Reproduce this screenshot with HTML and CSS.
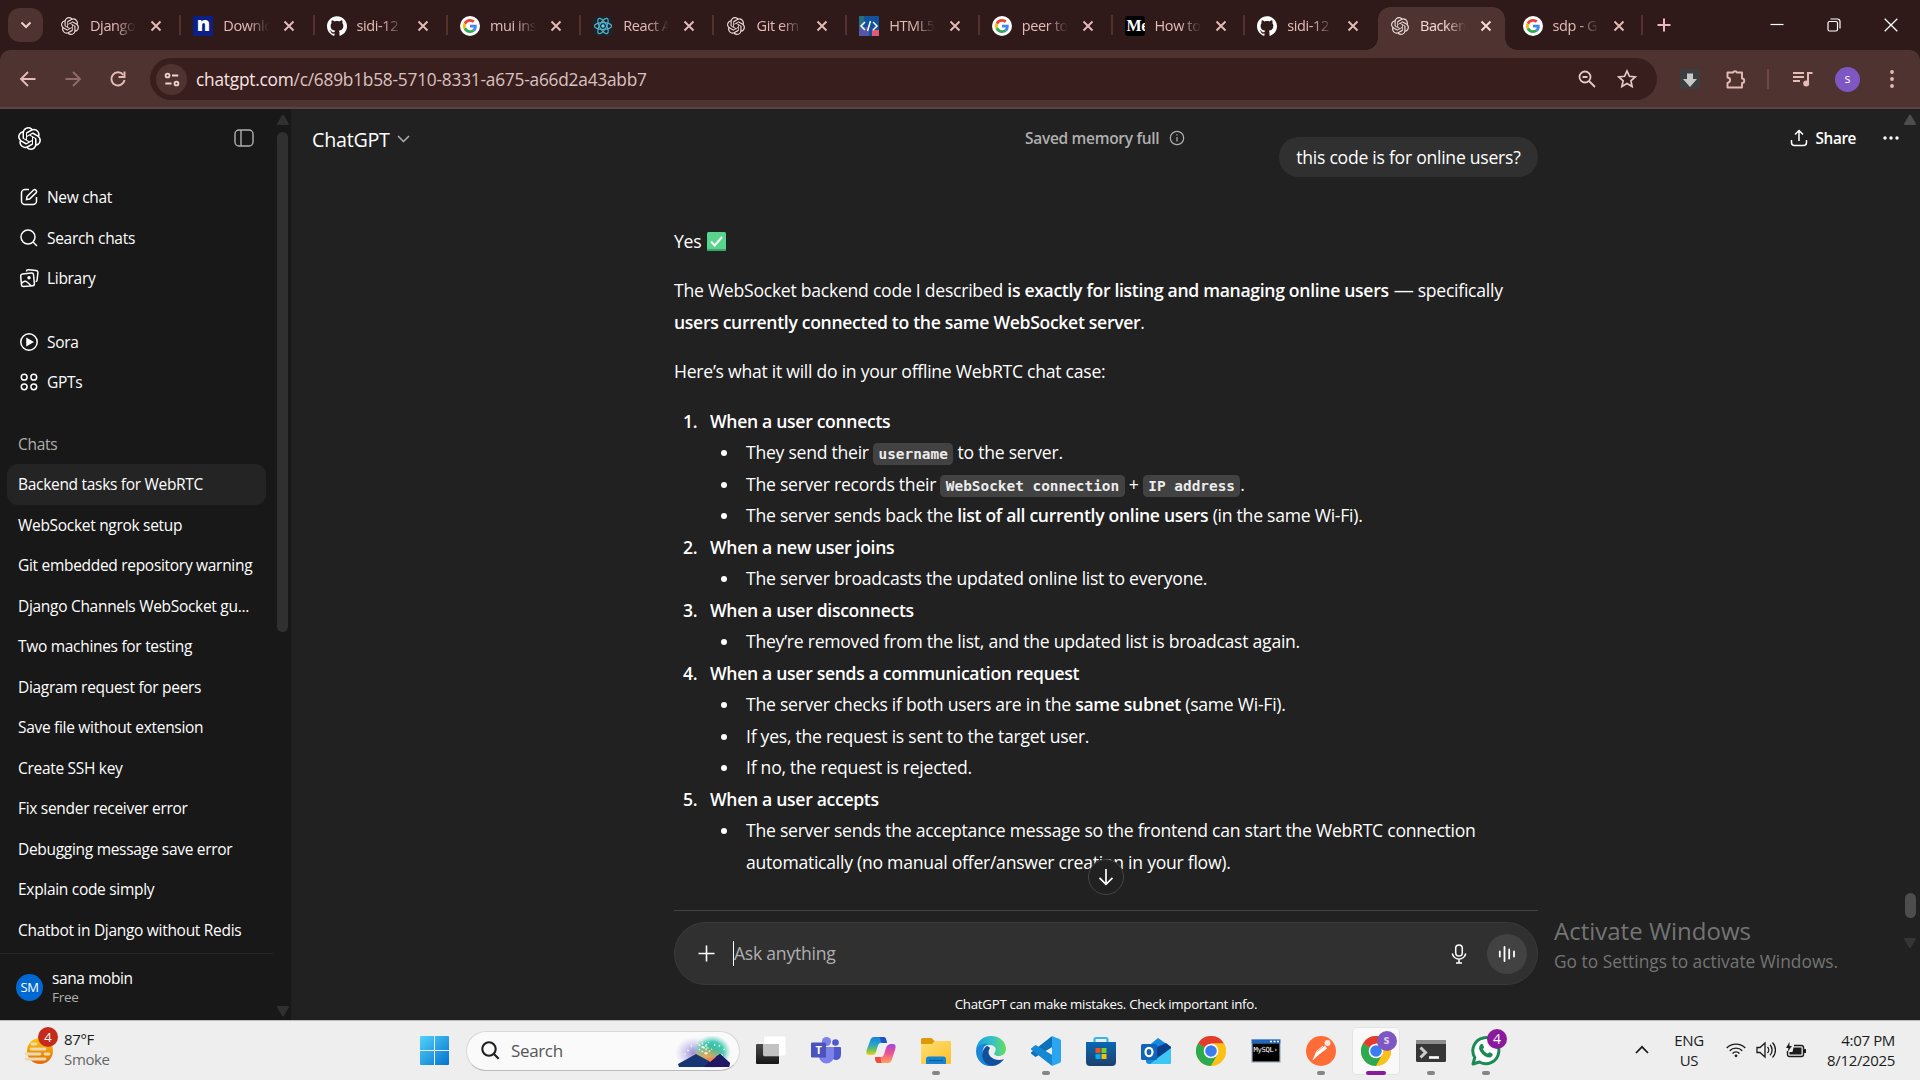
FILE: index.html
```html
<!DOCTYPE html>
<html lang="en">
<head>
<meta charset="utf-8">
<title>Backend tasks for WebRTC</title>
<link rel="stylesheet" href="styles.css">
</head>
<body>
<svg class="defs" width="0" height="0" aria-hidden="true">
  <defs>
    <symbol id="openai" viewBox="0 0 24 24"><path fill="currentColor" d="M22.2819 9.8211a5.9847 5.9847 0 0 0-.5157-4.9108 6.0462 6.0462 0 0 0-6.5098-2.9A6.0651 6.0651 0 0 0 4.9807 4.1818a5.9847 5.9847 0 0 0-3.9977 2.9 6.0462 6.0462 0 0 0 .7427 7.0966 5.98 5.98 0 0 0 .511 4.9107 6.051 6.051 0 0 0 6.5146 2.9001A5.9847 5.9847 0 0 0 13.2599 24a6.0557 6.0557 0 0 0 5.7718-4.2058 5.9894 5.9894 0 0 0 3.9977-2.9001 6.0557 6.0557 0 0 0-.7475-7.0729zm-9.022 12.6081a4.4755 4.4755 0 0 1-2.8764-1.0408l.1419-.0804 4.7783-2.7582a.7948.7948 0 0 0 .3927-.6813v-6.7369l2.02 1.1686a.071.071 0 0 1 .038.052v5.5826a4.504 4.504 0 0 1-4.4945 4.4944zm-9.6607-4.1254a4.4708 4.4708 0 0 1-.5346-3.0137l.142.0852 4.783 2.7582a.7712.7712 0 0 0 .7806 0l5.8428-3.3685v2.3324a.0804.0804 0 0 1-.0332.0615L9.74 19.9502a4.4992 4.4992 0 0 1-6.1408-1.6464zM2.3408 7.8956a4.485 4.485 0 0 1 2.3655-1.9728V11.6a.7664.7664 0 0 0 .3879.6765l5.8144 3.3543-2.0201 1.1685a.0757.0757 0 0 1-.071 0l-4.8303-2.7865A4.504 4.504 0 0 1 2.3408 7.872zm16.5963 3.8558L13.1038 8.364 15.1192 7.2a.0757.0757 0 0 1 .071 0l4.8303 2.7913a4.4944 4.4944 0 0 1-.6765 8.1042v-5.6772a.79.79 0 0 0-.407-.667zm2.0107-3.0231l-.142-.0852-4.7735-2.7818a.7759.7759 0 0 0-.7854 0L9.409 9.2297V6.8974a.0662.0662 0 0 1 .0284-.0615l4.8303-2.7866a4.4992 4.4992 0 0 1 6.6802 4.66zM8.3065 12.863l-2.02-1.1638a.0804.0804 0 0 1-.038-.0567V6.0742a4.4992 4.4992 0 0 1 7.3757-3.4537l-.142.0805L8.704 5.459a.7948.7948 0 0 0-.3927.6813zm1.0976-2.3654l2.602-1.4998 2.6069 1.4998v2.9994l-2.5974 1.4997-2.6067-1.4997Z"/></symbol>
    <symbol id="github" viewBox="0 0 24 24"><path fill="#fff" d="M12 .297c-6.63 0-12 5.373-12 12 0 5.303 3.438 9.8 8.205 11.385.6.113.82-.258.82-.577 0-.285-.01-1.04-.015-2.04-3.338.724-4.042-1.61-4.042-1.61C4.422 18.07 3.633 17.7 3.633 17.7c-1.087-.744.084-.729.084-.729 1.205.084 1.838 1.236 1.838 1.236 1.07 1.835 2.809 1.305 3.495.998.108-.776.417-1.305.76-1.605-2.665-.3-5.466-1.332-5.466-5.93 0-1.31.465-2.38 1.235-3.22-.135-.303-.54-1.523.105-3.176 0 0 1.005-.322 3.3 1.23.96-.267 1.98-.399 3-.405 1.02.006 2.04.138 3 .405 2.28-1.552 3.285-1.23 3.285-1.23.645 1.653.24 2.873.12 3.176.765.84 1.23 1.91 1.23 3.22 0 4.61-2.805 5.625-5.475 5.92.42.36.81 1.096.81 2.22 0 1.606-.015 2.896-.015 3.286 0 .315.21.69.825.57C20.565 22.092 24 17.592 24 12.297c0-6.627-5.373-12-12-12"/></symbol>
    <symbol id="google" viewBox="-10 -10 68 68"><circle cx="24" cy="24" r="34" fill="#fff"/><path fill="#EA4335" d="M24 9.500c3.540 0 6.710 1.220 9.210 3.600l6.850-6.850C35.900 2.380 30.470 0 24 0 14.620 0 6.510 5.380 2.560 13.220l7.980 6.190C12.430 13.720 17.740 9.500 24 9.500z"/><path fill="#4285F4" d="M46.980 24.550c0-1.570-.150-3.090-.380-4.550H24v9.020h12.940c-.580 2.960-2.260 5.480-4.780 7.180l7.730 6c4.510-4.180 7.090-10.360 7.090-17.650z"/><path fill="#FBBC05" d="M10.530 28.590c-.480-1.450-.760-2.990-.760-4.590s.270-3.140.760-4.590l-7.980-6.190C.920 16.460 0 20.120 0 24c0 3.880.920 7.540 2.560 10.780l7.970-6.190z"/><path fill="#34A853" d="M24 48c6.480 0 11.930-2.130 15.890-5.810l-7.730-6c-2.150 1.450-4.920 2.300-8.160 2.300-6.260 0-11.570-4.220-13.470-9.910l-7.980 6.190C6.510 42.620 14.620 48 24 48z"/></symbol>
    <symbol id="x" viewBox="0 0 12 12"><path d="M1.500 1.500l9 9M10.500 1.500l-9 9" stroke="currentColor" stroke-width="1.900" fill="none"/></symbol>
    <symbol id="chrome" viewBox="0 0 30 30"><circle cx="15" cy="15" r="15" fill="#fbc116"/><path d="M15 15L2 7.500A15 15 0 0 1 28 7.500H15z" fill="#e33b2e"/><path d="M15 15L2 7.500A15 15 0 0 0 15 30l6.500-11.300z" fill="#2da94f"/><path d="M15 7.500h13A15 15 0 0 1 15 30l6.500-11.300z" fill="#fbc116"/><circle cx="15" cy="15" r="7.300" fill="#fff"/><circle cx="15" cy="15" r="5.800" fill="#3b7ded"/></symbol>
    <linearGradient id="win" x1="0" y1="0" x2="1" y2="1"><stop offset="0" stop-color="#52d3fb"/><stop offset="1" stop-color="#0471ce"/></linearGradient>
    <linearGradient id="folder" x1="0" y1="0" x2="1" y2="1"><stop offset="0" stop-color="#ffdf72"/><stop offset="1" stop-color="#fbc02d"/></linearGradient>
    <linearGradient id="sun" x1="0" y1="0" x2="0" y2="1"><stop offset="0" stop-color="#fdc800"/><stop offset="1" stop-color="#e8650c"/></linearGradient>
    <linearGradient id="edgeTop" x1="0" y1="0" x2="1" y2="0"><stop offset="0" stop-color="#1b9de2"/><stop offset=".55" stop-color="#35c1c8"/><stop offset="1" stop-color="#66df59"/></linearGradient>
    <linearGradient id="copA" x1="0" y1="0" x2="0" y2="1"><stop offset="0" stop-color="#1483dc"/><stop offset=".45" stop-color="#2aa7c9"/><stop offset=".75" stop-color="#7fc34a"/><stop offset="1" stop-color="#f4cf1c"/></linearGradient>
    <linearGradient id="copB" x1="0" y1="0" x2="0" y2="1"><stop offset="0" stop-color="#a345dc"/><stop offset=".5" stop-color="#ee5390"/><stop offset="1" stop-color="#fea55b"/></linearGradient>
    <linearGradient id="store" x1="0" y1="0" x2="0" y2="1"><stop offset="0" stop-color="#0868b4"/><stop offset="1" stop-color="#1f3f6b"/></linearGradient>
    <linearGradient id="tvA" x1="0" y1="0" x2="0" y2="1"><stop offset="0" stop-color="#4b4b4b"/><stop offset="1" stop-color="#161616"/></linearGradient>
    <radialGradient id="glowL"><stop offset="0" stop-color="#8f86dd"/><stop offset="1" stop-color="#b9b4ec" stop-opacity="0"/></radialGradient>
    <radialGradient id="glowR"><stop offset="0" stop-color="#1eb9a3"/><stop offset=".6" stop-color="#44c9b4"/><stop offset="1" stop-color="#7fd8ca" stop-opacity="0"/></radialGradient>
    <radialGradient id="glowC"><stop offset="0" stop-color="#f2a654"/><stop offset="1" stop-color="#f2a654" stop-opacity="0"/></radialGradient>
  </defs>
</svg>

<div class="tabstrip">
  <button class="tab-search"><svg width="14" height="14" viewBox="0 0 14 14"><path d="M2.500 4.500L7 9l4.500-4.500" fill="none" stroke="#f0cfcb" stroke-width="2"/></svg></button>
  <div class="tabs">
    <div class="tab"><svg class="fav small"><use href="#openai"/></svg><span>Django</span><svg class="close"><use href="#x"/></svg></div>
    <div class="tab"><div class="fav node">n</div><span>Downlo</span><svg class="close"><use href="#x"/></svg></div>
    <div class="tab"><svg class="fav"><use href="#github"/></svg><span>sidi-12</span><svg class="close"><use href="#x"/></svg></div>
    <div class="tab"><svg class="fav"><use href="#google"/></svg><span>mui ins</span><svg class="close"><use href="#x"/></svg></div>
    <div class="tab"><svg class="fav" viewBox="0 0 20 20"><rect width="20" height="20" rx="3" fill="#1f2226"/><g fill="none" stroke="#4fb3cc" stroke-width="1.200"><ellipse cx="10" cy="10" rx="8.600" ry="3.400"/><ellipse cx="10" cy="10" rx="8.600" ry="3.400" transform="rotate(60 10 10)"/><ellipse cx="10" cy="10" rx="8.600" ry="3.400" transform="rotate(120 10 10)"/></g><circle cx="10" cy="10" r="1.700" fill="#61dafb"/></svg><span>React A</span><svg class="close"><use href="#x"/></svg></div>
    <div class="tab"><svg class="fav small"><use href="#openai"/></svg><span>Git em</span><svg class="close"><use href="#x"/></svg></div>
    <div class="tab"><svg class="fav" viewBox="0 0 20 20"><rect width="20" height="20" fill="#12529c"/><rect width="5" height="11" fill="#236f80"/><rect y="11" width="10" height="9" fill="#5257a8"/><rect x="13" y="14" width="7" height="6" fill="#e15a74"/><path d="M6 6l-4 4 4 4M14 6l4 4-4 4M11.500 5l-3 10" fill="none" stroke="#fff" stroke-width="1.500"/></svg><span>HTML5</span><svg class="close"><use href="#x"/></svg></div>
    <div class="tab"><svg class="fav"><use href="#google"/></svg><span>peer to</span><svg class="close"><use href="#x"/></svg></div>
    <div class="tab"><div class="fav medium">Me</div><span>How to</span><svg class="close"><use href="#x"/></svg></div>
    <div class="tab before-active"><svg class="fav"><use href="#github"/></svg><span>sidi-12</span><svg class="close"><use href="#x"/></svg></div>
    <div class="tab active"><svg class="fav small"><use href="#openai"/></svg><span>Backen</span><svg class="close"><use href="#x"/></svg></div>
    <div class="tab"><svg class="fav"><use href="#google"/></svg><span>sdp - G</span><svg class="close"><use href="#x"/></svg></div>
  </div>
  <svg class="new-tab" width="14" height="14" viewBox="0 0 14 14"><path d="M7 .500v13M.500 7h13" stroke="#e5bdb9" stroke-width="2"/></svg>
  <div class="window-buttons">
    <svg width="14" height="14" viewBox="0 0 14 14"><path d="M.500 6.500h13" stroke="#fff" stroke-width="1.200"/></svg>
    <svg width="14" height="14" viewBox="0 0 14 14" fill="none" stroke="#fff" stroke-width="1.200"><rect x="1" y="3.500" width="9.500" height="9.500" rx="1.500"/><path d="M3.500 1h7a2.500 2.500 0 0 1 2.500 2.500v7"/></svg>
    <svg width="14" height="14" viewBox="0 0 14 14"><path d="M.700.700l12.600 12.600M13.300.700L.700 13.300" stroke="#fff" stroke-width="1.300"/></svg>
  </div>
</div>

<div class="toolbar">
  <div class="nav">
    <svg width="18" height="18" viewBox="0 0 18 18" fill="none" stroke="#e6bab5" stroke-width="1.900"><path d="M16.500 9H2.500M9 2L2 9l7 7"/></svg>
    <svg width="18" height="18" viewBox="0 0 18 18" fill="none" stroke="#8f6b69" stroke-width="1.900"><path d="M1.500 9h14M9 2l7 7-7 7"/></svg>
    <svg width="18" height="18" viewBox="0 0 18 18" fill="none" stroke="#e6bab5" stroke-width="2"><path d="M14.300 5A6.600 6.600 0 1 0 15.500 10"/><path d="M15.500 1.500v5.500h-6"/></svg>
  </div>
  <div class="omnibox">
    <div class="site-info"><svg width="16" height="15" viewBox="0 0 18 16" fill="none" stroke="#eed5d2" stroke-width="2"><circle cx="4" cy="3.500" r="2.200"/><path d="M9 3.500h7M1.500 12.500h7"/><circle cx="14" cy="12.500" r="2.200"/></svg></div>
    <div class="url"><span class="host">chatgpt.com</span>/c/689b1b58-5710-8331-a675-a66d2a43abb7</div>
    <svg class="mag" width="18" height="18" viewBox="0 0 18 18" fill="none" stroke="#e0cbc9" stroke-width="1.800"><circle cx="7" cy="7" r="5.500"/><path d="M11 11l6 6M4.500 7h5"/></svg>
    <svg width="20" height="20" viewBox="0 0 20 20" fill="none" stroke="#e0cbc9" stroke-width="1.700"><path d="M10 2l2.400 5.300 5.800.600-4.300 3.900 1.200 5.700L10 14.600l-5.100 2.900 1.200-5.700-4.300-3.900 5.800-.600z"/></svg>
  </div>
  <div class="tools">
    <svg width="20" height="20" viewBox="0 0 20 20"><rect width="20" height="20" rx="2" fill="#3c3e40"/><path d="M7 4.500h6V10h4l-7 8-7-8h4z" fill="#c9c9c9"/></svg>
    <svg class="puzzle" width="22" height="22" viewBox="0 0 22 22"><path d="M2.500 4.500H8a2.200 2.200 0 0 1 4 0h5v6a2.200 2.200 0 0 1 0 4.500v4.500H2.500V15c3.500-1 3.500-5 0-5.500z" fill="none" stroke="#e6bab5" stroke-width="1.900" stroke-linejoin="round"/></svg>
    <i class="tool-sep"></i>
    <svg class="music" width="20" height="18" viewBox="0 0 20 18"><path d="M0 3h11M0 7h11M0 11h7M15 14V3h4.500" stroke="#e6bab5" stroke-width="2" fill="none"/><circle cx="13.200" cy="13.500" r="3" fill="#e6bab5"/></svg>
    <div class="profile">s</div>
    <svg class="kebab" width="6" height="20" viewBox="0 0 6 20" fill="#e6bab5"><circle cx="3" cy="3" r="1.900"/><circle cx="3" cy="10" r="1.900"/><circle cx="3" cy="17" r="1.900"/></svg>
  </div>
</div>

<div class="page">
  <aside class="sidebar">
    <div class="side-body">
      <div class="side-head">
        <svg width="23" height="23"><use href="#openai"/></svg>
        <svg width="20" height="18" viewBox="0 0 20 18" fill="none" stroke="#afafaf" stroke-width="1.400"><rect x="1" y="1" width="18" height="16" rx="4"/><path d="M7 1v16"/></svg>
      </div>
      <nav class="menu">
        <a><svg viewBox="0 0 20 20"><path d="M10 2.500H6A3.500 3.500 0 0 0 2.500 6v8A3.500 3.500 0 0 0 6 17.500h8a3.500 3.500 0 0 0 3.500-3.500v-4M7.500 12.500l.500-3 6.300-6.300a1.900 1.900 0 0 1 2.700 2.700L10.600 12z"/></svg>New chat</a>
        <a><svg viewBox="0 0 20 20"><circle cx="9" cy="9" r="7"/><path d="M14 14l4 4"/></svg>Search chats</a>
        <a><svg viewBox="0 0 20 20"><path d="M3.500 6l9-1a1.900 1.900 0 0 1 2 1.700l.900 9a1.900 1.900 0 0 1-1.700 2L4.500 18.500a1.900 1.900 0 0 1-2-1.700l-.800-8.700A1.900 1.900 0 0 1 3.500 6zM2.500 15.500C5 12.500 7 13 8 14c2 1.500 3 2.500 4 4M7.500 3.500c0-1.500 1-2 2.500-1.800l7 .800c1.500.200 2 1 1.900 2.400l-.800 7c0 1-.600 1.600-1.600 1.600"/><circle cx="10" cy="9.700" r="1" fill="currentColor"/></svg>Library</a>
      </nav>
      <nav class="menu">
        <a><svg viewBox="0 0 20 20"><circle cx="10" cy="10" r="8.200"/><path d="M8 6.700v6.600l5.500-3.300z" fill="currentColor"/></svg>Sora</a>
        <a><svg viewBox="0 0 20 20"><circle cx="5.200" cy="5.200" r="2.900"/><circle cx="14.800" cy="5.200" r="2.900"/><circle cx="5.200" cy="14.800" r="2.900"/><circle cx="14.800" cy="14.800" r="2.900"/></svg>GPTs</a>
      </nav>
      <h2>Chats</h2>
      <div class="history">
        <a class="current">Backend tasks for WebRTC</a>
        <a>WebSocket ngrok setup</a>
        <a>Git embedded repository warning</a>
        <a>Django Channels WebSocket gu...</a>
        <a>Two machines for testing</a>
        <a>Diagram request for peers</a>
        <a>Save file without extension</a>
        <a>Create SSH key</a>
        <a>Fix sender receiver error</a>
        <a>Debugging message save error</a>
        <a>Explain code simply</a>
        <a>Chatbot in Django without Redis</a>
      </div>
      <div class="account">
        <div class="avatar">SM</div>
        <div><div class="name">sana mobin</div><div class="plan">Free</div></div>
      </div>
    </div>
    <div class="scroll side-scroll">
      <svg width="14" height="12" viewBox="0 0 14 12"><path d="M7 1.500l5 8.500H2z" fill="#303030" stroke="#303030" stroke-width="2" stroke-linejoin="round"/></svg>
      <i></i>
      <svg class="end" width="14" height="12" viewBox="0 0 14 12"><path d="M7 10.500l5-8.500H2z" fill="#303030" stroke="#303030" stroke-width="2" stroke-linejoin="round"/></svg>
    </div>
  </aside>

  <main class="main">
    <header class="head">
      <div class="model">ChatGPT <svg width="13" height="8" viewBox="0 0 13 8"><path d="M1 1l5.500 5.500L12 1" fill="none" stroke="#b0b0b0" stroke-width="1.500"/></svg></div>
      <div class="memory">Saved memory full <svg width="16" height="16" viewBox="0 0 16 16" fill="none" stroke="#afafaf" stroke-width="1.200"><circle cx="8" cy="8" r="6.700"/><path d="M8 7v4.500M8 4.300v1.300"/></svg></div>
      <div class="actions">
        <svg width="18" height="18" viewBox="0 0 18 18" fill="none" stroke="#fff" stroke-width="1.500"><path d="M9 12V2M5 5.500l4-4 4 4M1.500 11v2.500A3 3 0 0 0 4.500 16.500h9a3 3 0 0 0 3-3V11"/></svg>
        <span class="share">Share</span>
        <svg class="more" width="18" height="6" viewBox="0 0 18 6" fill="#fff"><circle cx="3" cy="3" r="1.700"/><circle cx="9" cy="3" r="1.700"/><circle cx="15" cy="3" r="1.700"/></svg>
      </div>
    </header>

    <div class="column">
      <div class="thread">
        <div class="bubble">this code is for online users?</div>
        <article>
          <p class="yes">Yes <svg width="19" height="19" viewBox="0 0 19 19"><rect width="19" height="19" rx="1.500" fill="#58d58d"/><path d="M0 17h19v.500A1.500 1.500 0 0 1 17.500 19h-16A1.500 1.500 0 0 1 0 17.500z" fill="#3da56b"/><path d="M4 9.500l3.700 4L15 5" fill="none" stroke="#fff" stroke-width="2"/></svg></p>
          <p>The WebSocket backend code I described <b>is exactly for listing and managing online users</b> <span class="dash">—</span> specifically<br><b>users currently connected to the same WebSocket server</b>.</p>
          <p>Here’s what it will do in your offline WebRTC chat case:</p>
          <ol>
            <li><b>When a user connects</b>
              <ul><li>They send their <code>username</code> to the server.</li><li>The server records their <code>WebSocket connection</code> + <code>IP address</code>.</li><li>The server sends back the <b>list of all currently online users</b> (in the same Wi-Fi).</li></ul></li>
            <li><b>When a new user joins</b>
              <ul><li>The server broadcasts the updated online list to everyone.</li></ul></li>
            <li><b>When a user disconnects</b>
              <ul><li>They’re removed from the list, and the updated list is broadcast again.</li></ul></li>
            <li><b>When a user sends a communication request</b>
              <ul><li>The server checks if both users are in the <b>same subnet</b> (same Wi-Fi).</li><li>If yes, the request is sent to the target user.</li><li>If no, the request is rejected.</li></ul></li>
            <li><b>When a user accepts</b>
              <ul><li>The server sends the acceptance message so the frontend can start the WebRTC connection<br>automatically (no manual offer/answer creation in your flow).</li></ul></li>
          </ol>
        </article>
        <hr>
        <button class="to-bottom"><svg width="16" height="18" viewBox="0 0 16 18" fill="none" stroke="#fff" stroke-width="1.700"><path d="M8 1v15M1.500 9.800L8 16.300l6.500-6.500"/></svg></button>
      </div>
      <div class="composer">
        <svg width="17" height="17" viewBox="0 0 17 17"><path d="M8.500 .500v16M.500 8.500h16" stroke="#fff" stroke-width="1.600"/></svg>
        <div class="field">Ask anything</div>
        <svg class="mic" width="16" height="20" viewBox="0 0 16 20" fill="none" stroke="#fff" stroke-width="1.500"><rect x="4.700" y="1" width="6.600" height="11" rx="3.300"/><path d="M1.300 9.500a6.800 6.800 0 0 0 13.400 0M8 15.500V19M5 19h6"/></svg>
        <div class="voice"><svg width="18" height="16" viewBox="0 0 18 16"><path d="M1.800 5.500v5M6.500 1v14M11.200 3.500v9M16 5.500v5" stroke="#fff" stroke-width="1.800" stroke-linecap="round"/></svg></div>
      </div>
      <div class="note">ChatGPT can make mistakes. Check important info.</div>
    </div>

    <div class="scroll main-scroll">
      <svg width="14" height="12" viewBox="0 0 14 12"><path d="M7 1.500l5 8.500H2z" fill="#4d4d4d" stroke="#4d4d4d" stroke-width="2" stroke-linejoin="round"/></svg>
      <i></i>
      <svg class="down" width="14" height="10" viewBox="0 0 14 10"><path d="M7 9l5-8H2z" fill="#353535" stroke="#353535" stroke-width="2" stroke-linejoin="round"/></svg>
    </div>
    <div class="watermark"><div class="w1">Activate Windows</div><div class="w2">Go to Settings to activate Windows.</div></div>
  </main>
</div>

<footer class="taskbar">
  <div class="weather">
    <div class="weather-icon">
      <svg width="30" height="28" viewBox="0 0 30 28"><circle cx="16" cy="14" r="13" fill="url(#sun)"/><path d="M8 7h4M7 12h14M2 17h14M21 17h4M2 22h19" stroke="#e8dcb4" stroke-width="2.800" stroke-linecap="round"/></svg>
      <span class="badge red">4</span>
    </div>
    <div class="weather-text"><div>87°F</div><div class="dim">Smoke</div></div>
  </div>
  <svg class="start" width="29" height="29" viewBox="0 0 29 29"><path fill="url(#win)" d="M1 0h13v14H0V1a1 1 0 0 1 1-1zM15 0h13a1 1 0 0 1 1 1v13H15zM0 15h14v14H1a1 1 0 0 1-1-1zM15 15h14v13a1 1 0 0 1-1 1H15z"/></svg>
  <div class="search">
    <svg width="19" height="19" viewBox="0 0 19 19" fill="none" stroke="#1e1e1e" stroke-width="2.100"><circle cx="8" cy="8" r="6.700"/><path d="M12.700 12.700l5 5"/></svg>
    <span>Search</span>
    <svg class="scene" width="56" height="32" viewBox="0 0 56 32"><ellipse cx="19" cy="17" rx="19" ry="16" fill="url(#glowL)"/><ellipse cx="37" cy="16" rx="19" ry="17" fill="url(#glowR)"/><ellipse cx="32" cy="20" rx="18" ry="10" fill="url(#glowC)"/><path d="M28 12l-6-5M28 12l-1-8M28 12l6-6M28 12l7 0M31 18l-7-5M31 18l6-5M31 18V9M12 14l2 1M45 9l-2 3M50 13l-3 2M16 9l1 2M40 8l-1 3M9 18l2 0M48 19l-2 0" stroke="#fff8d8" stroke-width="1.200" stroke-dasharray="2 1.500"/><path d="M4 31l-1-3 18-10 11 6 3 1 10-7 10 9-1 4z" fill="#173573"/><path d="M29 31l6-6 10-7 10 9-1 4z" fill="#201765"/><path d="M31 22l4 4 6-5z" fill="#f5864a"/></svg>
  </div>
  <div class="apps">
    <div class="app"><svg viewBox="0 0 30 30"><rect x="0" y="8" width="23" height="20" rx="1" fill="url(#tvA)"/><rect x="7.500" y="0" width="22.500" height="20" rx="1" fill="#fff" stroke="#ddd" stroke-width=".500"/><path d="M8 8h15v12H8z" fill="#c2c2c2"/></svg></div>
    <div class="app"><svg viewBox="0 0 30 30"><circle cx="24.500" cy="6.500" r="3.300" fill="#5059c9"/><circle cx="15.500" cy="5.500" r="4.600" fill="#7b83eb"/><path d="M20 11h9a1 1 0 0 1 1 1v7a5 5 0 0 1-8 4z" fill="#5059c9"/><path d="M8 11h15v9a7.500 7.500 0 0 1-15 0z" fill="#7b83eb"/><rect y="6.500" width="15" height="15" rx="1.200" fill="#4b53bc"/><text x="7.500" y="18" text-anchor="middle" font-family="Open Sans" font-weight="700" font-size="11" fill="#fff">T</text></svg></div>
    <div class="app"><svg viewBox="0 0 30 30"><path d="M8 1h9c3 0 3 2 4 6h-6c-3 0-3 3-5 9-1 3-3 3-5 3H3c-3 0-3-3-2-6l3-8C5 2 6 1 8 1z" fill="url(#copA)"/><path d="M13 1h4c3 0 3 2 4 6h-4c-3 0-2-4-4-6z" fill="#2251c8"/><path d="M22 27h-9c-3 0-3-2-4-6h6c3 0 3-3 5-9 1-3 3-4 5-4h2c3 0 3 3 2 6l-3 9c-1 3-2 4-4 4z" fill="url(#copB)"/><path d="M16 27h-4c-2 0-3-2-3-6h4c3 0 1 4 3 6z" fill="#ee4b3a"/></svg></div>
    <div class="app"><svg viewBox="0 0 30 30"><path d="M0 3.500A1.500 1.500 0 0 1 1.500 2h9l3 3H29v5H0z" fill="#dd9a08"/><path d="M0 8h11l3-3h15a1 1 0 0 1 1 1v22H1a1 1 0 0 1-1-1z" fill="url(#folder)"/><path d="M5 28v-5a2.500 2.500 0 0 1 2.500-2.500h15A2.500 2.500 0 0 1 25 23v5z" fill="#1783d1"/><path d="M8 24.500h14" stroke="#0d5a9c" stroke-width="1.200"/></svg><i></i></div>
    <div class="app"><svg viewBox="0 0 30 30"><path d="M0 14C1 5 7 0 15 0c9 0 15 6 15 13 0 5-4 7-7 7-4 0-6-2-4-4 2-3 0-7-5-7-6 0-12 3-14 5z" fill="url(#edgeTop)"/><path d="M0 15c1-5 6-8 12-7-5 2-6 7-5 12 1 5 4 8 9 10C7 31 0 24 0 15z" fill="#1a86d8"/><path d="M11 10c-7 4-7 18 5 20 5 0 9-3 12-7-4 2-10 1-13-2s-3-6-1-9c-1-1-2-2-3-2z" fill="#10509a"/></svg></div>
    <div class="app"><svg viewBox="0 0 30 30"><path d="M20.500.500L23 2v8L4.500 21 0 17.500v-1z" fill="#0a71bd"/><path d="M20.500 29.500L23 28v-8L4.500 9 0 12.500v1z" fill="#1687d3"/><path d="M21 0l7.500 3A2 2 0 0 1 30 5v20a2 2 0 0 1-1.500 2L21 30z" fill="#2aa5ef"/></svg><i></i></div>
    <div class="app"><svg viewBox="0 0 30 30"><path d="M8.500 7V3.500A1.500 1.500 0 0 1 10 2h10a1.500 1.500 0 0 1 1.500 1.500V7" fill="none" stroke="#35b8ef" stroke-width="2.200"/><path d="M0 6h30v20a4 4 0 0 1-4 4H4a4 4 0 0 1-4-4z" fill="url(#store)"/><path d="M9.500 12h5v5h-5z" fill="#f1511b"/><path d="M15.500 12h5v5h-5z" fill="#80cc28"/><path d="M9.500 18h5v5h-5z" fill="#00adef"/><path d="M15.500 18h5v5h-5z" fill="#fbbc09"/></svg></div>
    <div class="app"><svg viewBox="0 0 30 30"><path d="M5 12L17 2l13 9v15a2 2 0 0 1-2 2H8a3 3 0 0 1-3-3z" fill="#1589dd"/><path d="M14 12l11-5 5 4v2l-14 9z" fill="#0b3f8e"/><path d="M30 12v14a2 2 0 0 1-2 2H9z" fill="#3cc8f3"/><rect y="8" width="16" height="16" rx="1.500" fill="#1065b8"/><ellipse cx="8" cy="16" rx="3.500" ry="4.200" fill="none" stroke="#fff" stroke-width="2.200"/></svg></div>
    <div class="app"><svg><use href="#chrome"/></svg></div>
    <div class="app"><svg viewBox="0 0 30 30"><rect y="3" width="30" height="24" rx="1" fill="#bcc7d3"/><rect x=".700" y="3.500" width="28.600" height="4" fill="#1b66c5"/><path d="M19 5.500h2M22.500 5.500h2M26 5.500h2" stroke="#fff" stroke-width="1.300"/><rect x="1.500" y="7.500" width="27" height="18" fill="#000"/><text x="2.500" y="15.500" font-family="DejaVu Sans Mono" font-size="7" textLength="24" lengthAdjust="spacingAndGlyphs" fill="#fff">MySQL›</text></svg></div>
    <div class="app"><svg viewBox="0 0 30 30"><circle cx="15" cy="15" r="15" fill="#ff6c37"/><circle cx="21.500" cy="7" r="3" fill="#fde9df"/><path d="M19 9.500l2 3-8 6-6 5.500 3-7z" fill="#fff"/><path d="M7 24l4-9 6-5" fill="none" stroke="#fff" stroke-width="1"/></svg><i></i></div>
    <div class="app open"><svg><use href="#chrome"/></svg><span class="badge user">s</span><i></i></div>
    <div class="app"><svg viewBox="0 0 30 30"><rect y="4" width="30" height="22" rx="1.500" fill="#363636"/><path d="M1.500 4h27A1.500 1.500 0 0 1 30 5.500V8H0V5.500A1.500 1.500 0 0 1 1.500 4z" fill="#8d8d8d"/><path d="M4.500 11.500l5 5-5 5" fill="none" stroke="#ccc" stroke-width="3"/><path d="M13 21.500h10" stroke="#fff" stroke-width="2.600"/></svg><i></i></div>
    <div class="app"><svg viewBox="0 0 30 30"><path d="M2 28l1.800-6.500A13 13 0 1 1 8.500 26z" fill="#fff" stroke="#1c8a55" stroke-width="3" stroke-linejoin="round"/><path d="M9.500 8.500c1-1 2-1 2.500.200l1 2.300c.300.700-1 1.500-1 2.200.800 1.900 2.500 3.400 4.500 4.300.800.300 1.500-1.500 2.300-1.200l2.300 1.200c1 .500.500 2.500-.500 3.300-1.500 1.200-4 1-6.500-.500-2.500-1.400-5-4.300-5.700-6.500-.700-2 0-4.300 1.100-5.300z" fill="#1c8a55"/></svg><span class="badge purple">4</span><i></i></div>
  </div>
  <div class="tray">
    <svg class="chev" width="14" height="9" viewBox="0 0 14 9"><path d="M1 8l6-6.200L13 8" fill="none" stroke="#1b1b1b" stroke-width="1.700"/></svg>
    <div class="lang"><div>ENG</div><div>US</div></div>
    <svg width="20" height="16" viewBox="0 0 20 16" fill="none" stroke="#1b1b1b" stroke-width="1.400"><path d="M.700 6a13 13 0 0 1 18.600 0M3.700 8.800a8.800 8.800 0 0 1 12.600 0M6.500 11.500a5 5 0 0 1 7 0"/><circle cx="10" cy="13.800" r="1.400" fill="#1b1b1b" stroke="none"/></svg>
    <svg width="20" height="18" viewBox="0 0 20 18" fill="none" stroke="#1b1b1b" stroke-width="1.300"><path d="M1 6.500h3L9 2v14l-5-4.500H1zM11.500 6a4.300 4.300 0 0 1 0 6M14 3.800a7.500 7.500 0 0 1 0 10.400M16.500 1.500a11 11 0 0 1 0 15"/></svg>
    <svg width="20" height="16" viewBox="0 0 20 16"><path d="M8 3.500h7.500A2 2 0 0 1 17.500 5.500v7a2 2 0 0 1-2 2h-12a2 2 0 0 1-2-2V9" fill="none" stroke="#1b1b1b" stroke-width="1.400"/><path d="M7.500 5.500h8v7h-12V10h3zM18 7h2v4h-2zM3.500 0L0 6h2.500L1.500 10 6 4H3.500z" fill="#1b1b1b"/></svg>
    <div class="clock"><div>4:07 PM</div><div>8/12/2025</div></div>
  </div>
</footer>
</body>
</html>
```
FILE: styles.css
```css
* { box-sizing: border-box; }
body {
  margin: 0;
  width: 1920px;
  height: 1080px;
  overflow: hidden;
  display: flex;
  flex-direction: column;
  background: #301a19;
  color: #fff;
  font-family: "Open Sans", "Noto Sans", sans-serif;
}
svg { display: block; flex: none; }
.defs { position: absolute; }
button { border: 0; padding: 0; display: grid; place-items: center; }
p, h2, ol, ul { margin: 0; padding: 0; }

/* Browser tab strip */
.tabstrip {
  height: 50px;
  flex: none;
  display: flex;
  align-items: center;
  padding-left: 8px;
  color: #e3bcb8;
}
.tab-search { width: 35px; height: 34px; border-radius: 12px; background: #4f3331; }
.tabs { display: flex; height: 50px; padding-left: 6px; }
.tab {
  position: relative;
  width: 132.700px;
  height: 43px;
  margin-top: 7px;
  padding: 0 4px 6px 11px;
  display: flex;
  align-items: center;
  font-size: 14.500px;
  letter-spacing: -.4px;
}
.tab:nth-child(-n+5) { width: 133.300px; }
.tab::after {
  content: "";
  position: absolute;
  right: 1px;
  top: 8px;
  width: 2px;
  height: 20px;
  background: #52322f;
}
.tab.active::after, .tab.before-active::after { display: none; }
.tab span {
  width: 46px;
  margin-left: 10px;
  overflow: hidden;
  white-space: nowrap;
  -webkit-mask-image: linear-gradient(90deg, #000 55%, transparent);
  mask-image: linear-gradient(90deg, #000 55%, transparent);
}
.fav { width: 20px; height: 20px; flex: none; color: #e9dad8; }
.fav.small { width: 18px; height: 18px; margin: 0 1px; }
.node { background: #0c1f87; color: #fff; font: 800 20px/16px "Open Sans", sans-serif; text-align: center; }
.medium { background: #000; color: #fff; border-radius: 3px; overflow: hidden; font: 700 16px/20px "Liberation Serif", serif; padding-left: 2px; }
.close { width: 12px; height: 12px; margin-left: 14px; }
.tab.active { color: #f4dcd9; }
.tab.active::before {
  content: "";
  position: absolute;
  z-index: 0;
  left: -13px;
  right: -5px;
  top: 0;
  bottom: 0;
  background:
    radial-gradient(circle at 0 0, transparent 11.500px, #4f3331 12px) 0 100% / 12px 12px no-repeat,
    radial-gradient(circle at 100% 0, transparent 11.500px, #4f3331 12px) 100% 100% / 12px 12px no-repeat,
    radial-gradient(circle at 12px 12px, #4f3331 11.500px, transparent 12px) 12px 0 / 12px 12px no-repeat,
    radial-gradient(circle at 0 12px, #4f3331 11.500px, transparent 12px) calc(100% - 12px) 0 / 12px 12px no-repeat,
    linear-gradient(#4f3331, #4f3331) 24px 0 / calc(100% - 48px) 12px no-repeat,
    linear-gradient(#4f3331, #4f3331) 12px 12px / calc(100% - 24px) 31px no-repeat;
}
.tab.active > * { z-index: 1; }
.new-tab { margin-left: 13px; }
.window-buttons { margin-left: auto; display: flex; gap: 43px; padding-right: 22px; }

/* Browser toolbar */
.toolbar {
  height: 59px;
  flex: none;
  display: flex;
  align-items: center;
  padding-top: 1px;
  background: #4f3331;
  border-bottom: 2px solid #5a4543;
  border-radius: 10px 10px 0 0;
}
.nav { display: flex; gap: 27px; width: 150px; padding-left: 19px; }
.omnibox {
  width: 1507px;
  height: 42px;
  border-radius: 21px;
  background: #391e1e;
  display: flex;
  align-items: center;
  padding: 0 20px 0 6px;
}
.site-info { width: 31px; height: 31px; border-radius: 50%; background: #4f3331; display: grid; place-items: center; }
.url { margin-left: 9px; flex: 1; font-size: 17.300px; color: #d9c3c0; letter-spacing: -.220px; white-space: nowrap; }
.host { color: #f6e4e2; }
.mag { margin-right: 21px; }
.tools { display: flex; align-items: center; padding-left: 23px; }
.puzzle { margin-left: 25px; }
.tool-sep { width: 2px; height: 20px; background: #6d4a48; margin-left: 20px; }
.music { margin-left: 24px; }
.profile {
  width: 25px; height: 25px; margin-left: 22px; border-radius: 50%;
  background: #7e57c2; font-size: 12.500px; line-height: 23px; text-align: center;
}
.kebab { margin-left: 29px; }

/* Page */
.page { flex: 1; display: flex; min-height: 0; background: #212121; }
.sidebar { width: 292px; background: #181818; display: flex; flex: none; border-right: 1px solid #1f1f1f; }
.side-body { width: 274px; display: flex; flex-direction: column; font-size: 15.500px; letter-spacing: -.300px; }
.side-head { height: 58px; padding: 0 19px 0 18px; display: flex; align-items: center; justify-content: space-between; }
.menu { margin: 1px 0 22px; }
.side-head + .menu { margin-top: 10px; }
.menu a { height: 40.500px; display: flex; align-items: center; gap: 8px; padding-left: 19px; }
.menu svg { width: 20px; height: 20px; fill: none; stroke: #fff; stroke-width: 1.500; color: #fff; }
h2 { height: 39.500px; padding: 0 18px; font-size: 15.500px; font-weight: 400; line-height: 39px; color: #afafaf; }
.history { display: flex; flex-direction: column; }
.history a { height: 40.500px; line-height: 40.500px; margin: 0 7px; padding-left: 11px; white-space: nowrap; border-radius: 11px; }
.history .current { background: #242424; }
.account { flex: 1; margin-top: 3px; border-top: 1px solid #262626; display: flex; align-items: center; gap: 9px; padding: 0 0 0 16px; }
.avatar { width: 27px; height: 27px; border-radius: 50%; background: #0069d1; font-size: 13px; line-height: 27px; text-align: center; }
.name { line-height: 20px; letter-spacing: -.400px; }
.plan { font-size: 13.500px; line-height: 18px; color: #afafaf; }
.scroll { display: flex; flex-direction: column; align-items: center; }
.scroll i { width: 11px; border-radius: 6px; }
.side-scroll { width: 17px; padding: 5px 0 3px; margin-left: 1px; }
.side-scroll i { height: 500px; margin-top: 6px; background: #303030; }
.side-scroll .end { margin-top: auto; }
.main-scroll { position: absolute; right: 3px; top: 5px; }
.main-scroll i { height: 25px; margin-top: 767px; background: #4d4d4d; }
.main-scroll .down { margin-top: 20px; }

.main { flex: 1; position: relative; }
.head {
  position: absolute;
  inset: 0 0 auto 0;
  height: 58px;
  display: grid;
  grid-template-columns: 713px 1fr auto;
  align-items: center;
  padding: 0 20px;
}
.model { display: flex; align-items: center; gap: 7px; font-size: 19.700px; letter-spacing: -.250px; padding-top: 2px; }
.memory { display: flex; align-items: center; gap: 10px; font-size: 15.500px; font-weight: 600; color: #afafaf; letter-spacing: -.300px; }
.actions { display: flex; align-items: center; font-size: 15.300px; font-weight: 600; }
.share { margin-left: 8px; letter-spacing: -.400px; }
.more { margin-left: 26px; }

.column { width: 864px; margin-left: 382px; height: 100%; display: flex; flex-direction: column; }
.thread { position: relative; height: 813px; padding-top: 28px; flex: none; display: flex; flex-direction: column; font-size: 17.600px; line-height: 31.500px; letter-spacing: -.260px; }
.bubble { align-self: flex-end; height: 40px; line-height: 40px; padding: 0 17.500px; border-radius: 20px; background: #303030; }
article { margin-top: 48.700px; }
article p { margin-bottom: 18px; }
.yes { display: flex; align-items: center; gap: 7px; }
.yes svg { margin-left: -1px; }
.dash { display: inline-block; transform: scaleX(1.15); margin: 0 1.500px; }
b { font-weight: 600; letter-spacing: -.320px; }
ol { list-style: none; counter-reset: step; }
ol > li { counter-increment: step; padding-left: 36px; }
ol > li::before { content: counter(step) "."; float: left; width: 27px; margin-left: -27px; font-weight: 600; }
ul { list-style: none; padding-left: 36px; }
ul li::before { content: ""; float: left; width: 6px; height: 6px; border-radius: 50%; background: #fff; margin: 13px 0 0 -25px; }
code {
  font: 700 14.400px/20px "DejaVu Sans Mono", monospace;
  letter-spacing: 0;
  padding: 3px 5.400px;
  border-radius: 4.500px;
  background: #424242;
  color: #ececec;
}
hr { position: absolute; left: 0; right: 0; top: 801px; margin: 0; border: 0; height: 1px; background: #454545; }
.to-bottom { position: absolute; left: 414px; top: 750px; width: 36px; height: 36px; border-radius: 50%; background: #212121; border: 1px solid #454545; }
.composer {
  height: 63px;
  flex: none;
  border-radius: 32px;
  background: #303030;
  border: 1px solid #3a3a3a;
  display: flex;
  align-items: center;
  padding: 0 10px 0 23px;
}
.field { flex: 1; margin-left: 18px; border-left: 1px solid #fff; height: 25px; line-height: 24px; font-size: 17.600px; letter-spacing: -.250px; color: #afafaf; }
.voice { width: 40px; height: 40px; margin-left: 20px; border-radius: 50%; background: #424242; display: grid; place-items: center; }
.note { flex: 1; text-align: center; font-size: 13.300px; line-height: 38px; letter-spacing: -.280px; }
.watermark { position: absolute; left: 1262px; top: 805px; color: #747474; white-space: nowrap; }
.w1 { font-size: 24px; line-height: 34px; }
.w2 { font-size: 17.350px; line-height: 26px; }

/* Taskbar */
.taskbar {
  height: 60px;
  flex: none;
  display: flex;
  align-items: center;
  background: #eee;
  border-top: 1px solid #bbb;
  color: #1b1b1b;
  font-size: 15px;
  line-height: 20px;
  letter-spacing: -.350px;
}
.weather { display: flex; gap: 9px; width: 420px; padding-left: 24px; align-items: center; }
.weather-icon { position: relative; width: 31px; height: 28px; }
.weather-text { padding-bottom: 3px; }
.dim { color: #666; }
.badge { position: absolute; border-radius: 50%; color: #fff; text-align: center; font-size: 13px; letter-spacing: 0; }
.badge.red { width: 20px; height: 20px; left: 14px; top: -10px; background: #c42b1c; }
.search {
  width: 274px;
  height: 40px;
  margin-left: 17px;
  border: 1px solid #d8d8d8;
  border-bottom-color: #bbb;
  border-radius: 20px;
  background: #fafafa;
  display: flex;
  align-items: center;
  padding: 0 8px 0 14px;
  font-size: 17px;
  color: #555;
}
.search span { margin-left: 11px; flex: 1; }
.scene { margin-top: 2px; }
.apps { display: flex; padding-left: 3px; }
.app { position: relative; width: 55px; height: 48px; display: grid; place-items: center; }
.app > svg { width: 30px; height: 30px; position: relative; }
.app > i { position: absolute; left: 24px; bottom: 0; width: 8px; height: 4px; border-radius: 2px; background: #858585; }
.app.open { background: #f9f9f9; border: 1px solid #e3e3e3; border-radius: 5px; width: 48px; margin: 0 3.500px; }
.app.open > i { left: 13px; width: 20px; bottom: -1px; background: #8a1a9b; }
.badge.user { width: 20px; height: 20px; right: 2px; top: 3px; background: #7e57c2; color: #d9cdee; font-size: 12px; line-height: 18px; font-weight: 700; }
.badge.purple { width: 20px; height: 20px; right: 6px; top: 2px; background: #8a1a9b; font-size: 14px; }
.tray { margin-left: auto; display: flex; align-items: center; padding: 0 25px 2px 0; gap: 10px; }
.lang { width: 44px; margin: 0 5px 0 7px; text-align: center; }
.tray .chev { margin-right: 1px; }
.clock { text-align: right; width: 79px; }
```
